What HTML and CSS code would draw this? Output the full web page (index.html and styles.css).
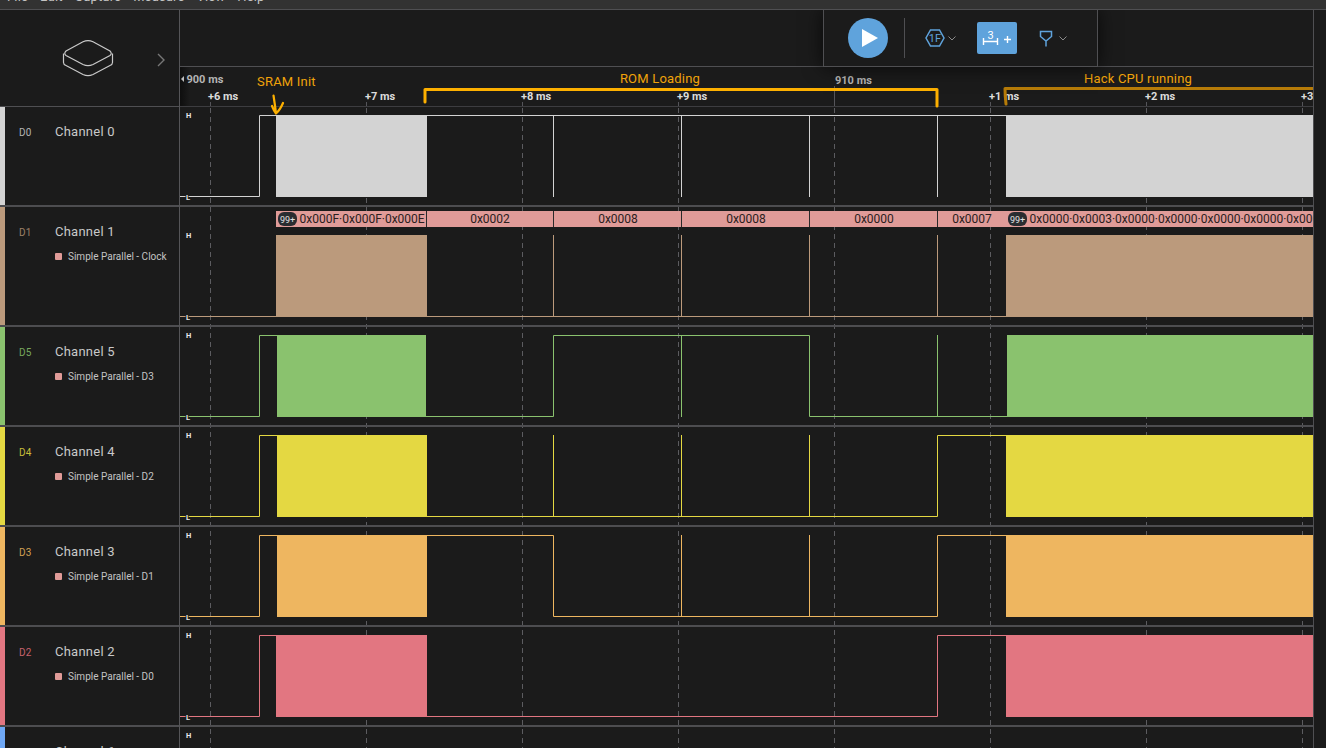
FILE: index.html
```html
<!DOCTYPE html>
<html>
<head>
  <title>Logic Analyzer Capture</title>
  <link rel="stylesheet" href="styles.css">
</head>
<body>
  <div class="menubar">
    <span>File</span><span>Edit</span><span>Capture</span><span>Measure</span><span>View</span><span>Help</span>
  </div>

  <div class="app">
    <div class="sidebar">
      <div class="side-head">
        <svg class="device" width="52" height="40" viewBox="0 0 52 40">
          <path d="M4 12 L21 2.8 Q26 .6 31 2.8 L48 12 Q50.5 14.5 48 16.5 L31 25.5 Q26 27.8 21 25.5 L4 16.5 Q1.5 14.5 4 12Z"/>
          <path d="M1.5 14.5 V23.5 Q1.5 25.5 4 26.5 L21 35.5 Q26 37.8 31 35.5 L48 26.5 Q50.5 25.5 50.5 23.5 V14.5"/>
        </svg>
        <svg class="expand" width="8" height="14" viewBox="0 0 8 14"><path d="M1 1 L7 7 L1 13"/></svg>
      </div>

      <div class="channel ch0">
        <div class="chan-top"><span class="chan-id">D0</span><span class="chan-name">Channel 0</span></div>
      </div>
      <div class="channel tall ch1">
        <div class="chan-top"><span class="chan-id">D1</span><span class="chan-name">Channel 1</span></div>
        <div class="chan-sub"><i></i>Simple Parallel - Clock</div>
      </div>
      <div class="channel ch5">
        <div class="chan-top"><span class="chan-id">D5</span><span class="chan-name">Channel 5</span></div>
        <div class="chan-sub"><i></i>Simple Parallel - D3</div>
      </div>
      <div class="channel ch4">
        <div class="chan-top"><span class="chan-id">D4</span><span class="chan-name">Channel 4</span></div>
        <div class="chan-sub"><i></i>Simple Parallel - D2</div>
      </div>
      <div class="channel ch3">
        <div class="chan-top"><span class="chan-id">D3</span><span class="chan-name">Channel 3</span></div>
        <div class="chan-sub"><i></i>Simple Parallel - D1</div>
      </div>
      <div class="channel ch2">
        <div class="chan-top"><span class="chan-id">D2</span><span class="chan-name">Channel 2</span></div>
        <div class="chan-sub"><i></i>Simple Parallel - D0</div>
      </div>
      <div class="channel ch6">
        <div class="chan-top"><span class="chan-id">D6</span><span class="chan-name">Channel 6</span></div>
      </div>
    </div>

    <div class="timeline">
      <div class="toolstrip">
        <div class="toolbar">
          <button class="play"><svg width="18" height="20" viewBox="0 0 18 20"><path d="M1 1 L17 10 L1 19Z"/></svg></button>
          <div class="tool-sep"></div>
          <svg class="tool-icon" width="20" height="18" viewBox="0 0 20 18">
            <path class="blue-line" d="M5.500 1 H14.500 L19 9 L14.500 17 H5.500 L1 9Z"/>
            <text x="10" y="13" class="hex-text">1F</text>
          </svg>
          <svg class="caret" width="8" height="5" viewBox="0 0 8 5"><path d="M.5 .5 L4 4 L7.500 .5"/></svg>
          <div class="measure">
            <svg width="40" height="32" viewBox="0 0 40 32">
              <text x="13.700" y="17" class="measure-num">3</text>
              <path class="white-line" d="M6.500 16 V23 M20.500 16 V23 M6.500 19.500 H20.500 M27 17.500 H34 M30.500 14 V21"/>
            </svg>
          </div>
          <svg class="tool-icon trigger" width="14" height="17" viewBox="0 0 14 17">
            <path class="blue-line" d="M1.500 1.500 H12.500 V6.500 L7 11 L1.500 6.500Z M7 11 V16.500"/>
          </svg>
          <svg class="caret" width="8" height="5" viewBox="0 0 8 5"><path d="M.5 .5 L4 4 L7.500 .5"/></svg>
        </div>
      </div>

      <svg class="ruler" width="1133" height="40" viewBox="180 67 1133 40">
        <defs>
          <linearGradient id="fade" x1="0" x2="1" y1="0" y2="0">
            <stop offset="0" stop-color="#0e0e0e"/>
            <stop offset="1" stop-color="#1b1b1b"/>
          </linearGradient>
          <g id="grid">
            <path d="M210.500 0 V800 M366.500 0 V800 M522.500 0 V800 M678.500 0 V800 M834.500 0 V800 M990.500 0 V800 M1146.500 0 V800 M1302.500 0 V800"/>
          </g>
        </defs>
        <rect x="180" y="67" width="10" height="39" fill="url(#fade)"/>
        <path class="tick" d="M210.500 102 V106 M366.500 102 V106 M522.500 102 V106 M678.500 102 V106 M834.500 86 V106 M990.500 102 V106 M1146.500 102 V106 M1302.500 102 V106"/>
        <path class="axis" d="M180 106.500 H1313"/>
        <path class="edge-arrow" d="M181 79 L184 76 V82Z"/>
        <text class="major" x="186.500" y="83">900 ms</text>
        <text class="major" x="835" y="84">910 ms</text>
        <text class="minor" x="208" y="100">+6 ms</text>
        <text class="minor" x="365" y="100">+7 ms</text>
        <text class="minor" x="521" y="100">+8 ms</text>
        <text class="minor" x="677" y="100">+9 ms</text>
        <text class="minor" x="989" y="100">+1 ms</text>
        <text class="minor" x="1145" y="100">+2 ms</text>
        <text class="minor" x="1301" y="100">+3 ms</text>
        <text class="note" x="257" y="86">SRAM Init</text>
        <text class="note mid" x="660" y="83">ROM Loading</text>
        <text class="note mid" x="1138" y="83">Hack CPU running</text>
        <path class="bracket" d="M425 102 V89.500 H937 V106"/>
        <path class="bracket dim" d="M1006 104 Q1005 96 1005 88.500 H1313"/>
        <path class="pen" d="M273.500 95.500 Q275 105 276 113.500 M272 106 Q274 111 276 113.500 Q280 110 283 103"/>
      </svg>

      <div class="lane ch0">
        <svg width="1133" height="98" viewBox="180 107 1133 98">
          <use class="dash" href="#grid"/>
          <path class="wave" d="M180 196.500 H259.500 V115.500 H1006 M553.500 115 V197 M681.500 115 V197 M809.500 115 V197 M937.500 115 V197"/>
          <rect class="burst" x="276" y="115" width="151" height="82"/>
          <rect class="burst" x="1006" y="115" width="307" height="82"/>
          <text class="lvl" x="186" y="118">H</text>
          <text class="lvl" x="186" y="200">L</text>
        </svg>
      </div>

      <div class="lane tall ch1">
        <svg width="1133" height="118" viewBox="180 207 1133 118">
          <use class="dash" href="#grid"/>
          <path class="wave" d="M180 316.500 H1006 M553.500 235 V317 M681.500 235 V317 M809.500 235 V317 M937.500 235 V317"/>
          <rect class="burst" x="276" y="235" width="151" height="82"/>
          <rect class="burst" x="1006" y="235" width="307" height="82"/>
          <rect class="decode" x="276" y="211" width="1037" height="16"/>
          <path class="decode-sep" d="M426.500 211 V227 M553.500 211 V227 M681.500 211 V227 M809.500 211 V227 M937.500 211 V227"/>
          <rect class="pill" x="278" y="212" width="19" height="14" rx="6"/>
          <text class="pill-text" x="287.500" y="222.500">99+</text>
          <text class="val" x="299.500" y="223">0x000F·0x000F·0x000E</text>
          <text class="val mid" x="490" y="223">0x0002</text>
          <text class="val mid" x="618" y="223">0x0008</text>
          <text class="val mid" x="746" y="223">0x0008</text>
          <text class="val mid" x="874" y="223">0x0000</text>
          <text class="val mid" x="972" y="223">0x0007</text>
          <rect class="pill" x="1008" y="212" width="19" height="14" rx="6"/>
          <text class="pill-text" x="1017.500" y="222.500">99+</text>
          <text class="val" x="1029.500" y="223">0x0000·0x0003·0x0000·0x0000·0x0000·0x0000·0x0000</text>
          <text class="lvl" x="186" y="238">H</text>
          <text class="lvl" x="186" y="320">L</text>
        </svg>
      </div>

      <div class="lane ch5">
        <svg width="1133" height="98" viewBox="180 327 1133 98">
          <use class="dash" href="#grid"/>
          <path class="wave" d="M180 416.500 H259.500 V335.500 H277 M426 416.500 H553.500 V335.500 H809.500 V416.500 H1007 M681.500 335 V417 M937.500 335 V417"/>
          <rect class="burst" x="277" y="335" width="149" height="82"/>
          <rect class="burst" x="1007" y="335" width="306" height="82"/>
          <text class="lvl" x="186" y="338">H</text>
          <text class="lvl" x="186" y="420">L</text>
        </svg>
      </div>

      <div class="lane ch4">
        <svg width="1133" height="98" viewBox="180 427 1133 98">
          <use class="dash" href="#grid"/>
          <path class="wave" d="M180 516.500 H259.500 V435.500 H277 M426 516.500 H937.500 V435.500 H1006 M553.500 435 V517 M681.500 435 V517 M809.500 435 V517"/>
          <rect class="burst" x="277" y="435" width="150" height="82"/>
          <rect class="burst" x="1006" y="435" width="307" height="82"/>
          <text class="lvl" x="186" y="438">H</text>
          <text class="lvl" x="186" y="520">L</text>
        </svg>
      </div>

      <div class="lane ch3">
        <svg width="1133" height="98" viewBox="180 527 1133 98">
          <use class="dash" href="#grid"/>
          <path class="wave" d="M180 616.500 H259.500 V535.500 H277 M426 535.500 H553.500 V616.500 H937.500 V535.500 H1006 M681.500 535 V617 M809.500 535 V617"/>
          <rect class="burst" x="277" y="535" width="150" height="82"/>
          <rect class="burst" x="1006" y="535" width="307" height="82"/>
          <text class="lvl" x="186" y="538">H</text>
          <text class="lvl" x="186" y="620">L</text>
        </svg>
      </div>

      <div class="lane ch2">
        <svg width="1133" height="98" viewBox="180 627 1133 98">
          <use class="dash" href="#grid"/>
          <path class="wave" d="M180 716.500 H259.500 V635.500 H276 M426 716.500 H937.500 V635.500 H1006"/>
          <rect class="burst" x="276" y="635" width="151" height="82"/>
          <rect class="burst" x="1006" y="635" width="307" height="82"/>
          <text class="lvl" x="186" y="638">H</text>
          <text class="lvl" x="186" y="720">L</text>
        </svg>
      </div>

      <div class="lane ch6">
        <svg width="1133" height="98" viewBox="180 727 1133 98">
          <use class="dash" href="#grid"/>
          <text class="lvl" x="186" y="738">H</text>
        </svg>
      </div>
    </div>

    <div class="scrollbar"></div>
  </div>
</body>
</html>
```

FILE: styles.css
```css
* {
  box-sizing: border-box;
}

html, body {
  margin: 0;
  height: 748px;
  overflow: hidden;
}

body {
  background-color: #1b1b1b;
  color: #cfcfcf;
  font-family: Roboto, "Liberation Sans", sans-serif;
}

svg {
  display: block;
}

.ch0 { --c: #d3d3d3; --id: #b4b4b4; }
.ch1 { --c: #bb9a7c; --id: #9d8168; }
.ch5 { --c: #8ac26e; --id: #77a75e; }
.ch4 { --c: #e4d842; --id: #c9be3a; }
.ch3 { --c: #eeb660; --id: #d2a054; }
.ch2 { --c: #e27681; --id: #c7626d; }
.ch6 { --c: #6fa8f5; --id: #6094d8; }

/* menu */
.menubar {
  height: 10px;
  background-color: #323232;
  border-bottom: 1px solid #4f4f52;
  overflow: hidden;
  display: flex;
  font-size: 13px;
  line-height: 15px;
  color: #c4c4c4;
  padding-left: 7px;
  gap: 12px;
}

.menubar span {
  margin-top: -11px;
  letter-spacing: .15px;
}

.app {
  display: flex;
  height: 738px;
  overflow: hidden;
}

/* left column */
.sidebar {
  width: 180px;
  flex: none;
  border-right: 1px solid #555558;
}

.side-head {
  height: 97px;
  border-bottom: 1px solid #4f4f52;
  display: flex;
  align-items: flex-start;
  padding: 29px 0 0 62px;
}

.device {
  fill: none;
  stroke: #c9c9c9;
  stroke-width: 1.2;
}

.expand {
  margin: 14px 0 0 43px;
  fill: none;
  stroke: #777;
  stroke-width: 1.4;
}

.channel {
  height: 100px;
  border-bottom: 2px solid #4d4d50;
  padding: 16px 0 0 19px;
  background: linear-gradient(var(--c), var(--c)) no-repeat left top / 5px 100%;
}

.channel.tall {
  height: 120px;
}

.chan-top {
  display: flex;
  align-items: center;
  height: 16px;
}

.chan-id {
  width: 36px;
  padding-top: 2px;
  font-size: 10px;
  letter-spacing: .3px;
  color: var(--id);
}

.chan-name {
  font-size: 13px;
  letter-spacing: .25px;
  color: #c9c9c9;
}

.chan-sub {
  display: flex;
  align-items: center;
  margin: 10px 0 0 36px;
  height: 14px;
  font-size: 10px;
  color: #c4c4c4;
}

.chan-sub i {
  width: 7px;
  height: 7px;
  margin-right: 6px;
  border-radius: 1px;
  background-color: #e09b98;
}

/* timeline */
.timeline {
  width: 1133px;
  flex: none;
}

.scrollbar {
  position: relative;
  z-index: 3;
  flex: 1;
  background-color: #1b1b1b;
  border-left: 1px solid #4f4f52;
}

.toolstrip {
  height: 57px;
  border-bottom: 1px solid #4f4f52;
  display: flex;
  padding-left: 643px;
}

.toolbar {
  position: relative;
  z-index: 3;
  width: 275px;
  height: 57px;
  background-color: #1b1b1b;
  border: 1px solid #4f4f52;
  border-top: none;
  box-shadow: 0 0 18px rgba(0, 0, 0, .7);
  display: flex;
  align-items: center;
  padding: 0 0 0 24px;
}

.play {
  width: 40px;
  height: 40px;
  padding: 0 0 0 3px;
  border: none;
  border-radius: 50%;
  background-color: #5fa3dc;
  display: flex;
  align-items: center;
  justify-content: center;
}

.play path {
  fill: #fff;
}

.tool-sep {
  width: 1px;
  height: 40px;
  margin: 0 20px 0 16px;
  background-color: #4f4f52;
}

.blue-line {
  fill: none;
  stroke: #5fa3dc;
  stroke-width: 1.5;
}

.hex-text {
  fill: #5fa3dc;
  font-size: 11px;
  text-anchor: middle;
}

.caret {
  margin-left: 3px;
  fill: none;
  stroke: #8a8a8a;
}

.measure {
  width: 40px;
  height: 32px;
  margin: 0 22px 0 21px;
  border-radius: 2px;
  background-color: #5fa3dc;
}

.measure-num {
  fill: #fff;
  font-size: 11px;
  text-anchor: middle;
}

.white-line {
  fill: none;
  stroke: #fff;
  stroke-width: 1.4;
}

.trigger + .caret {
  margin-left: 6px;
}

/* ruler */
.ruler {
  position: relative;
  z-index: 2;
  overflow: visible;
}

.tick {
  stroke: #55555a;
  fill: none;
}

.axis {
  stroke: #3d3d40;
}

.edge-arrow {
  fill: #bdbdbd;
}

.major, .minor {
  font-size: 11px;
  font-weight: 700;
}

.major {
  fill: #b4b4b4;
}

.minor {
  fill: #dcdcdc;
}

.note {
  fill: #f0a30a;
  font-size: 13px;
  letter-spacing: .2px;
}

.mid {
  text-anchor: middle;
}

.bracket {
  fill: none;
  stroke: #fdb000;
  stroke-width: 3;
  stroke-linejoin: round;
  stroke-linecap: round;
}

.bracket.dim {
  stroke: #b67b08;
}

.pen {
  fill: none;
  stroke: #fdb000;
  stroke-width: 2.2;
  stroke-linecap: round;
  stroke-linejoin: round;
}

/* lanes */
.lane {
  height: 100px;
  border-bottom: 2px solid #4d4d50;
}

.lane.tall {
  height: 120px;
}

.dash {
  fill: none;
  stroke: #5c5c60;
  stroke-dasharray: 5 4;
}

.wave {
  fill: none;
  stroke: var(--c);
}

.burst {
  fill: var(--c);
}

.lvl {
  fill: #e8e8e8;
  font-size: 7.5px;
  font-weight: 700;
  stroke: #1b1b1b;
  stroke-width: 2px;
  paint-order: stroke;
}

.decode {
  fill: #e09b98;
}

.decode-sep {
  stroke: #2a2a2a;
}

.pill {
  fill: #2a2c30;
}

.pill-text {
  fill: #e2e2e2;
  font-size: 9px;
  text-anchor: middle;
}

.val {
  fill: #2a2020;
  font-size: 12px;
}
```
